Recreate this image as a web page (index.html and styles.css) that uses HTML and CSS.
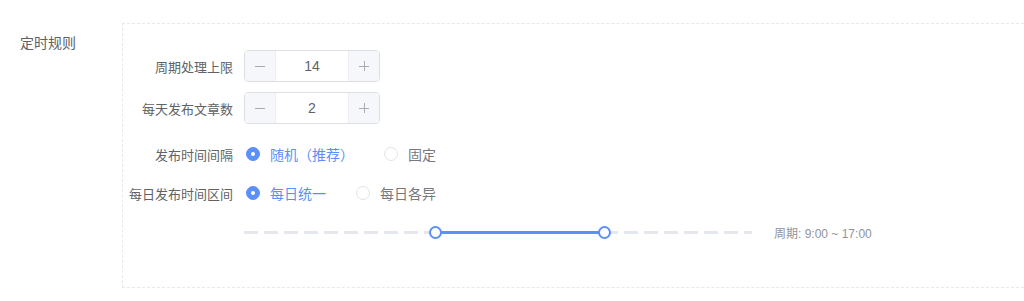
FILE: index.html
```html
<!DOCTYPE html>
<html lang="zh-CN">
<head>
    <meta charset="UTF-8">
    <title>定时规则</title>
    <link rel="stylesheet" href="styles.css">
</head>
<body>
    <!-- 定时规则 -->
    <section class="seccion">
        <div class="seccion-titulo">定时规则</div>
        <div class="seccion-caja">
            <div class="fila fila-num">
                <label class="etiqueta">周期处理上限</label>
                <div class="numero">
                    <span class="numero-btn izq">
                        <svg width="10" height="10" viewBox="0 0 10 10"><path d="M0 5.5h10" stroke="#a8abb2" stroke-width="1"/></svg>
                    </span>
                    <span class="numero-valor">14</span>
                    <span class="numero-btn der">
                        <svg width="10" height="10" viewBox="0 0 10 10"><path d="M0 5.5h10M5.5 0v10" stroke="#a8abb2" stroke-width="1"/></svg>
                    </span>
                </div>
            </div>
            <div class="fila fila-num fila-sep">
                <label class="etiqueta">每天发布文章数</label>
                <div class="numero">
                    <span class="numero-btn izq">
                        <svg width="10" height="10" viewBox="0 0 10 10"><path d="M0 5.5h10" stroke="#a8abb2" stroke-width="1"/></svg>
                    </span>
                    <span class="numero-valor">2</span>
                    <span class="numero-btn der">
                        <svg width="10" height="10" viewBox="0 0 10 10"><path d="M0 5.5h10M5.5 0v10" stroke="#a8abb2" stroke-width="1"/></svg>
                    </span>
                </div>
            </div>
            <div class="fila">
                <label class="etiqueta">发布时间间隔</label>
                <div class="radios">
                    <span class="radio activo"><span class="radio-circulo"></span>随机（推荐）</span>
                    <span class="radio"><span class="radio-circulo"></span>固定</span>
                </div>
            </div>
            <div class="fila">
                <label class="etiqueta">每日发布时间区间</label>
                <div class="radios">
                    <span class="radio activo"><span class="radio-circulo"></span>每日统一</span>
                    <span class="radio"><span class="radio-circulo"></span>每日各异</span>
                </div>
            </div>
            <div class="fila">
                <span class="etiqueta"></span>
                <div class="deslizador">
                    <div class="pista">
                        <div class="pista-activa" style="left: 37.6%; width: 33.3%;"></div>
                        <span class="manija" style="left: 37.6%;"></span>
                        <span class="manija" style="left: 70.9%;"></span>
                    </div>
                    <span class="periodo">周期: 9:00 ~ 17:00</span>
                </div>
            </div>
        </div>
    </section>
</body>
</html>
```

FILE: styles.css
```css
/* Reset básico */
* {
    margin: 0;
    padding: 0;
    box-sizing: border-box;
}

body {
    font-family: 'Noto Sans CJK SC', 'Noto Sans', sans-serif;
    background-color: #ffffff;
    color: #606266;
    overflow: hidden;
}

/* Sección */
.seccion {
    display: flex;
    align-items: flex-start;
}

.seccion-titulo {
    width: 122px;
    padding-left: 20px;
    margin-top: 32px;
    font-size: 14px;
    line-height: 20px;
    color: #606266;
    flex-shrink: 0;
}

.seccion-caja {
    flex-grow: 1;
    margin-top: 23px;
    height: 265px;
    border: 1px dashed #e6e8eb;
    border-right: none;
    padding-top: 26px;
}

/* Filas */
.fila {
    display: flex;
    align-items: center;
    height: 32px;
    margin-bottom: 7px;
}

.fila-num {
    margin-bottom: 10px;
}

.fila-num.fila-sep {
    margin-bottom: 14px;
}

.etiqueta {
    width: 121px;
    padding-right: 11px;
    text-align: right;
    font-size: 13px;
    color: #606266;
    flex-shrink: 0;
}

/* Contador */
.numero {
    display: flex;
    width: 136px;
    height: 32px;
    border: 1px solid #dcdfe6;
    border-radius: 4px;
    overflow: hidden;
}

.numero-btn {
    width: 31px;
    display: flex;
    align-items: center;
    justify-content: center;
    background-color: #f5f7fa;
}

.numero-btn.izq {
    border-right: 1px solid #eceef2;
}

.numero-btn.der {
    border-left: 1px solid #eceef2;
}

.numero-valor {
    flex-grow: 1;
    text-align: center;
    font-family: 'Liberation Sans', sans-serif;
    font-size: 14px;
    line-height: 30px;
    color: #606266;
}

/* Radios */
.radios {
    display: flex;
    align-items: center;
    padding-left: 2px;
}

.radio {
    display: flex;
    align-items: center;
    margin-right: 30px;
    font-size: 14px;
    color: #606266;
    opacity: 0.85;
}

.radio-circulo {
    width: 14px;
    height: 14px;
    margin-right: 10px;
    border: 1px solid #dcdfe6;
    border-radius: 50%;
    background-color: #ffffff;
    position: relative;
}

.radio.activo {
    color: #5b8ff9;
    opacity: 1;
}

.radio.activo .radio-circulo {
    background-color: #5b8ff9;
    border-color: #5b8ff9;
}

.radio.activo .radio-circulo::after {
    content: '';
    position: absolute;
    left: 50%;
    top: 50%;
    width: 4px;
    height: 4px;
    margin: -2px 0 0 -2px;
    border-radius: 50%;
    background-color: #ffffff;
}

/* Deslizador */
.deslizador {
    display: flex;
    align-items: center;
    gap: 22px;
}

.pista {
    position: relative;
    width: 508px;
    height: 3px;
    background: repeating-linear-gradient(to right, #e4e7ed 0, #e4e7ed 14px, transparent 14px, transparent 20px);
}

.pista-activa {
    position: absolute;
    top: 0;
    height: 3px;
    background-color: #5b8ff9;
}

.manija {
    position: absolute;
    top: 50%;
    width: 13px;
    height: 13px;
    margin: -6.5px 0 0 -6.5px;
    border: 2px solid #5b8ff9;
    border-radius: 50%;
    background-color: #ffffff;
}

.periodo {
    font-family: 'Liberation Sans', 'Noto Sans CJK SC', sans-serif;
    font-size: 12px;
    color: #909399;
}
```
